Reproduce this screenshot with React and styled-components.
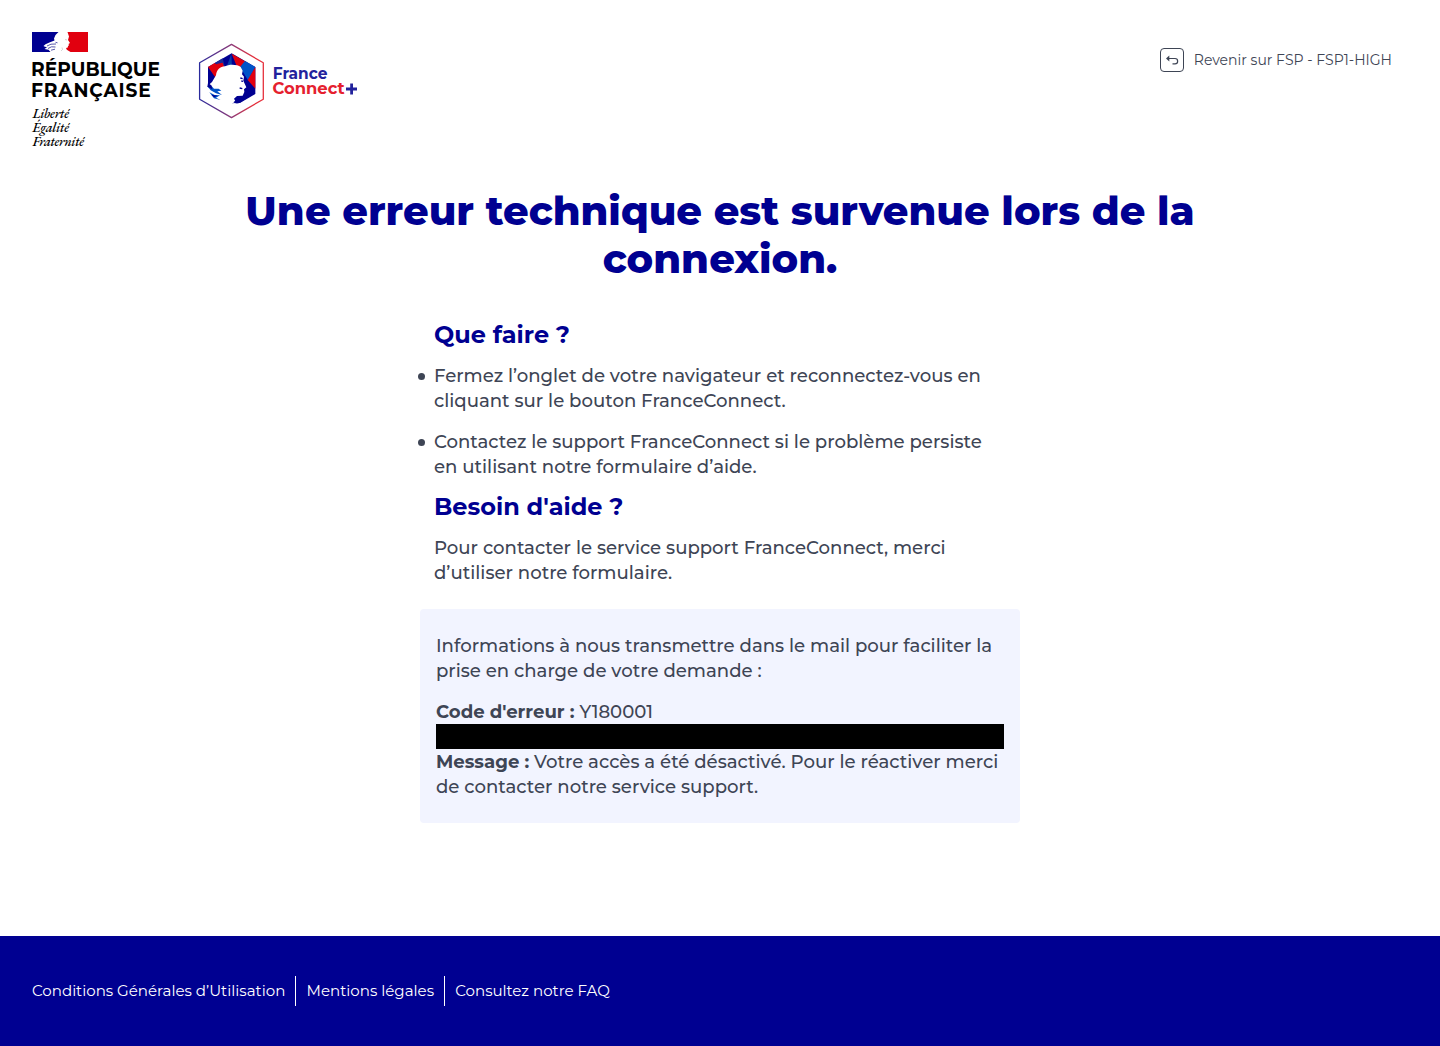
import React from 'react';
import styled, { createGlobalStyle } from 'styled-components';

const BLUE = '#000091';
const RED = '#e1000f';
const TEXT = '#3e4555';
const SANS = "Montserrat, Inter, 'Liberation Sans', sans-serif";

const GlobalStyle = createGlobalStyle`
  *, *::before, *::after { box-sizing: border-box; }
  body {
    margin: 0;
    background: #fff;
    color: ${TEXT};
    font-family: ${SANS};
  }
  h1, h2, p, ul { margin: 0; padding: 0; }
  a { color: inherit; text-decoration: none; }
`;

const Page = styled.div`
  min-height: 1046px;
  display: flex;
  flex-direction: column;
`;

const Header = styled.header`
  display: flex;
  align-items: flex-start;
  justify-content: space-between;
  height: 187px;
  padding: 32px 48px 0 32px;
`;

const Logos = styled.div`
  display: flex;
  gap: 36px;
`;

const RepubliqueSvg = styled.svg`
  display: block;
  width: 130px;
  height: 118px;
  overflow: visible;
`;

const ConnectSvg = styled.svg`
  display: block;
  width: 164px;
  height: 78px;
  margin-top: 10px;
`;

const BackLink = styled.a`
  display: flex;
  align-items: center;
  gap: 10px;
  height: 24px;
  margin-top: 16px;
  font-size: 14px;
  font-weight: 400;
  white-space: nowrap;
`;

const BackIcon = styled.svg`
  display: block;
  width: 24px;
  height: 24px;
`;

const Main = styled.main`
  flex: 1;
  display: flex;
  flex-direction: column;
  align-items: center;
`;

const Title = styled.h1`
  max-width: 996px;
  color: ${BLUE};
  font-size: 40px;
  font-weight: 800;
  line-height: 48px;
  text-align: center;
`;

const Content = styled.div`
  width: 600px;
  margin-top: 38px;
`;

const Section = styled.section`
  padding: 0 14px;
  margin-bottom: ${p => p.$gap}px;
`;

const Subtitle = styled.h2`
  margin-bottom: 14px;
  color: ${BLUE};
  font-size: 24px;
  font-weight: 700;
  line-height: 28px;
`;

const Steps = styled.ul`
  display: flex;
  flex-direction: column;
  gap: 16px;
  list-style: none;
`;

const Step = styled.li`
  display: flex;
  margin-left: -16px;

  &::before {
    content: '';
    flex: none;
    width: 7px;
    height: 7px;
    margin: 10px 9px 0 0;
    border-radius: 50%;
    background: ${TEXT};
  }
`;

const Paragraph = styled.p`
  font-size: 18.11px;
  font-weight: 500;
  line-height: 25px;
`;

const Label = styled.strong`
  font-weight: 700;
`;

const Notice = styled.div`
  display: flex;
  flex-direction: column;
  gap: 16px;
  padding: 24px 16px;
  border-radius: 4px;
  background: #f2f4ff;
`;

const Redacted = styled.div`
  height: 25px;
  background: #000;
`;

const Footer = styled.footer`
  height: 110px;
  padding: 40px 32px;
  background: ${BLUE};
  color: #fff;
`;

const FooterNav = styled.nav`
  display: flex;
  height: 30px;
`;

const FooterLink = styled.a`
  padding-right: 10px;
  font-size: 15.06px;
  font-weight: 400;
  line-height: 29px;
  white-space: nowrap;

  & + & {
    padding-left: 10.2px;
    border-left: 1px solid #fff;
  }
`;

function RepubliqueLogo() {
  return (
    <RepubliqueSvg viewBox="0 0 130 118" role="img" aria-label="République Française">
      <path fill={BLUE} d="M0 0H26.5L23.5 3 22 6.5 22.5 8.5 18 10.3 13.5 12.2 11.5 14 13 14.8 15 15.3 12.5 17 16.5 17.8 18.5 20H0Z" />
      <path fill={RED} d="M35.5 0H56V20H38.5L34.8 17.8 34 16 35.8 15.4 36 14 37 13.2 36.5 12 38 11 36 8 37 4.5Z" />
      <path
        fill="none"
        stroke="#2d2d95"
        strokeWidth="0.8"
        d="M15 14L19 12.2 24 12M16 16.5L19.5 14.8 23.5 15M19 18.2L23 17.2M23.5 10.3L25.5 10.8"
      />
      <path fill="none" stroke="#aaa" strokeWidth="0.5" d="M33 7.5L35 8M30 15.5L30.5 17.5 29 19" />
      <g fontFamily={SANS} fontWeight="700" fontSize="20" fill="#000" transform="scale(.93 1)">
        <text x="-1" y="44.3" textLength="138.6">RÉPUBLIQUE</text>
        <text x="-1" y="65.3" textLength="128.6">FRANÇAISE</text>
      </g>
      <g
        fontFamily="'EB Garamond', 'Liberation Serif', serif"
        fontStyle="italic"
        fontSize="13.6"
        fontWeight="500"
        fill="#000"
      >
        <text x="0.5" y="86" textLength="36.5">Liberté</text>
        <text x="0.5" y="100" textLength="36.5">Égalité</text>
        <text x="0.5" y="114" textLength="51.5">Fraternité</text>
      </g>
    </RepubliqueSvg>
  );
}

function FranceConnectLogo() {
  return (
    <ConnectSvg viewBox="0 0 164 78" role="img" aria-label="FranceConnect+">
      <defs>
        <linearGradient id="fc-edge" x1="0" x2="1">
          <stop offset="0" stopColor="#2a2a9c" />
          <stop offset="0.5" stopColor="#8c3a78" />
          <stop offset="0.85" stopColor="#e5303c" />
        </linearGradient>
      </defs>
      <path
        fill="#fff"
        stroke="url(#fc-edge)"
        strokeWidth="1.3"
        strokeLinejoin="round"
        d="M33.5 2.4L65.3 20.8V57.2L33.5 75.6L1.6 57.2V20.8Z"
      />
      <g transform="translate(-8 -6) scale(.3333333)">
        <path fill="#000091" d="M125 52L196 93V174L151 200 126 202 90 180 54 150V93Z" />
        <path fill="#e1000f" d="M54 93L74 81 108 98 80 130Z" />
        <path fill="#1c2a96" d="M74 81L98 67 106 98Z" />
        <path fill="#e1000f" d="M80 84L98 80 104 98 90 98Z" />
        <path fill="#0a3ba8" d="M124 53L110 92 126 92Z" />
        <path fill="#e1000f" d="M125 53L169 78 154 98 140 90Z" />
        <path fill="#0053c8" d="M165 75L196 93 174 133 150 93Z" />
        <path fill="#e1000f" d="M196 93V158L173 132Z" />
        <path
          fill="#fff"
          d="M52 151L66 138 78 118C80 101 90 92 105 91C115 84 143 84 152 93L158 104 156 115 162 122 160 134 169 154 162 160 163 168 158 179 141 180 132 188 139 200 127 202 111 218 50 184Z"
        />
        <path fill="#000091" d="M141 184C150 184 158 182 164 176L180 180 150 200C142 204 134 202 130 199L136 194Z" />
        <path fill="#0053c8" d="M52 151L64 149 72 158 86 158 94 164 82 166 96 177 78 172 62 163ZM58 169L74 177 90 178 78 185 92 192 72 187Z" />
        <path fill="#000091" d="M54 141L64 148 67 160 52 152ZM64 176L82 179 72 184Z" />
        <path fill="none" stroke="#000091" strokeWidth="4" d="M151 126L158 128M154 135L159 136M149 156L157 158" />
      </g>
      <g fontFamily={SANS} fontWeight="700" fontSize="16.2">
        <text x="74.8" y="37.4" textLength="54.6" lengthAdjust="spacingAndGlyphs" fill="#22229c">France</text>
        <text x="74.4" y="52.4" textLength="72.2" lengthAdjust="spacingAndGlyphs" fill="#e5202e">Connect</text>
      </g>
      <path fill="#22229c" d="M152.2 41.5H155V45.5H159V48.5H155V52.5H152.2V48.5H148V45.5H152.2Z" />
    </ConnectSvg>
  );
}

export default function App() {
  return (
    <Page>
      <GlobalStyle />
      <Header>
        <Logos>
          <RepubliqueLogo />
          <FranceConnectLogo />
        </Logos>
        <BackLink href="#">
          <BackIcon viewBox="0 0 24 24" fill="none" stroke={TEXT}>
            <rect x="0.5" y="0.5" width="23" height="23" rx="3.5" />
            <path d="M7 10.5H15A2.6 2.6 0 0 1 15 15.8H12.5" strokeWidth="1.2" />
            <path d="M6 10.5L9.3 7.6V13.4Z" fill={TEXT} stroke="none" />
          </BackIcon>
          Revenir sur FSP - FSP1-HIGH
        </BackLink>
      </Header>

      <Main>
        <Title>Une erreur technique est survenue lors de la connexion.</Title>

        <Content>
          <Section $gap={14}>
            <Subtitle>Que faire ?</Subtitle>
            <Steps>
              <Step>
                <Paragraph>
                  Fermez l’onglet de votre navigateur et reconnectez-vous en cliquant sur le bouton
                  FranceConnect.
                </Paragraph>
              </Step>
              <Step>
                <Paragraph>
                  Contactez le support FranceConnect si le problème persiste en utilisant notre
                  formulaire d’aide.
                </Paragraph>
              </Step>
            </Steps>
          </Section>

          <Section $gap={24}>
            <Subtitle>Besoin d'aide ?</Subtitle>
            <Paragraph>
              Pour contacter le service support FranceConnect, merci d’utiliser notre formulaire.
            </Paragraph>
          </Section>

          <Notice>
            <Paragraph>
              Informations à nous transmettre dans le mail pour faciliter la prise en charge de
              votre demande :
            </Paragraph>
            <div>
              <Paragraph><Label>Code d'erreur :</Label> Y180001</Paragraph>
              <Redacted />
              <Paragraph>
                <Label>Message :</Label> Votre accès a été désactivé. Pour le réactiver merci de
                contacter notre service support.
              </Paragraph>
            </div>
          </Notice>
        </Content>
      </Main>

      <Footer>
        <FooterNav>
          <FooterLink href="#">Conditions Générales d’Utilisation</FooterLink>
          <FooterLink href="#">Mentions légales</FooterLink>
          <FooterLink href="#">Consultez notre FAQ</FooterLink>
        </FooterNav>
      </Footer>
    </Page>
  );
}
